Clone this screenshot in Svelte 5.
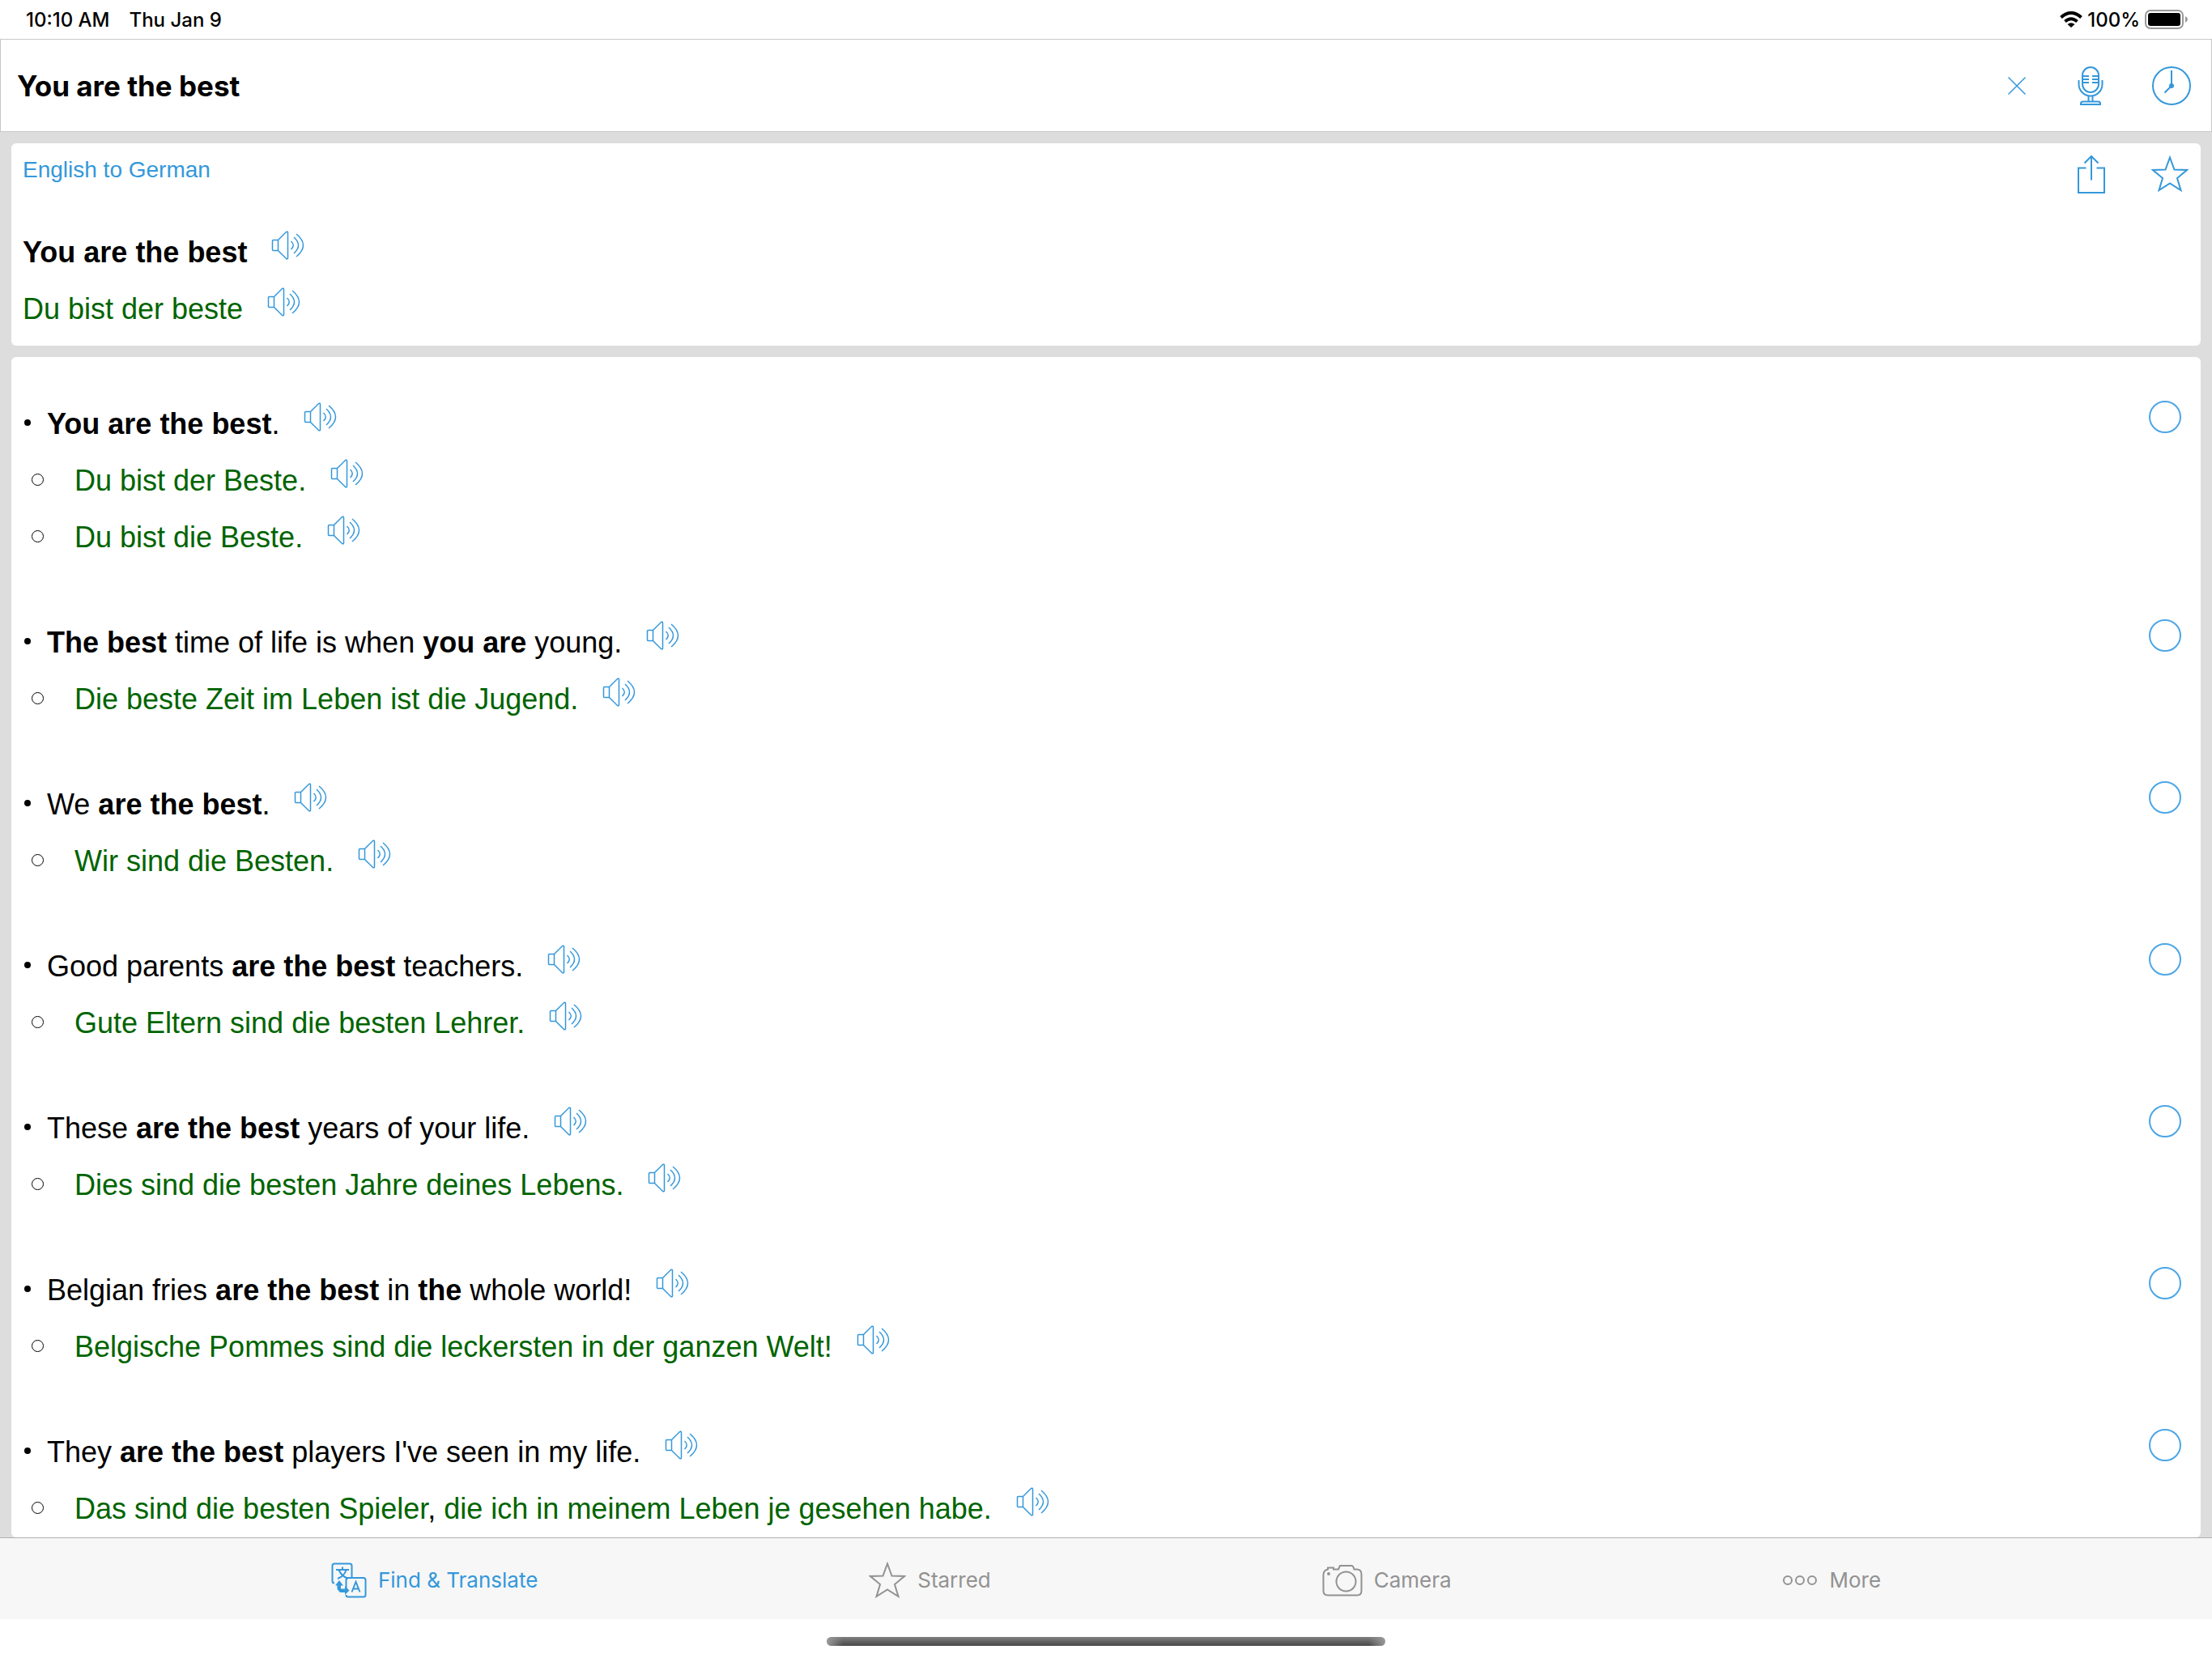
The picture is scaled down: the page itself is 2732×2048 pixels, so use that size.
<script lang="ts">
  interface Part {
    text: string;
    strong?: boolean;
    plain?: boolean;
  }

  interface Example {
    source: Part[];
    targets: Part[][];
  }

  const examples: Example[] = [
    {
      source: [{ text: "You are the best", strong: true }, { text: "." }],
      targets: [
        [{ text: "Du bist der Beste." }],
        [{ text: "Du bist die Beste." }],
      ],
    },
    {
      source: [
        { text: "The best", strong: true },
        { text: " time of life is when " },
        { text: "you are", strong: true },
        { text: " young." },
      ],
      targets: [[{ text: "Die beste Zeit im Leben ist die Jugend." }]],
    },
    {
      source: [
        { text: "We " },
        { text: "are the best", strong: true },
        { text: "." },
      ],
      targets: [[{ text: "Wir sind die Besten." }]],
    },
    {
      source: [
        { text: "Good parents " },
        { text: "are the best", strong: true },
        { text: " teachers." },
      ],
      targets: [[{ text: "Gute Eltern sind die besten Lehrer." }]],
    },
    {
      source: [
        { text: "These " },
        { text: "are the best", strong: true },
        { text: " years of your life." },
      ],
      targets: [[{ text: "Dies sind die besten Jahre deines Lebens." }]],
    },
    {
      source: [
        { text: "Belgian fries " },
        { text: "are the best", strong: true },
        { text: " in " },
        { text: "the", strong: true },
        { text: " whole world!" },
      ],
      targets: [
        [{ text: "Belgische Pommes sind die leckersten in der ganzen Welt!" }],
      ],
    },
    {
      source: [
        { text: "They " },
        { text: "are the best", strong: true },
        { text: " players I've seen in my life." },
      ],
      targets: [
        [
          { text: "Das sind die besten Spieler" },
          { text: ",", plain: true },
          { text: " die ich in meinem Leben je gesehen habe." },
        ],
      ],
    },
  ];

  const tabs = [
    { id: "translate", label: "Find & Translate" },
    { id: "starred", label: "Starred" },
    { id: "camera", label: "Camera" },
    { id: "more", label: "More" },
  ];

  let query = $state("You are the best");
  let activeTab = $state("translate");
  let picked = $state(examples.map(() => false));
</script>

{#snippet speaker()}
  <button class="speaker" aria-label="Listen">
    <svg width="42" height="36" viewBox="0 0 42 36">
      <path d="M8.5 11.5h-6q-1 0-1 1v11q0 1 1 1h6zM8.5 11.5 18.5 1.500q2-1 2 1v31q0 2-2 1L8.500 24.500" />
      <path d="M24.500 13q5.500 5 0 10M28 8q11 10 0 20M31 4q17 14 0 28" />
    </svg>
  </button>
{/snippet}

{#snippet star()}
  <svg width="46" height="46" viewBox="0 0 46 46">
    <path d="M23 2.5 28.5 17.5 44 18 32 28 36.5 43 23 34.5 9.5 43 14 28 2 18 17.5 17.5z" />
  </svg>
{/snippet}

<div class="app">
  <header class="status-bar">
    <span>10:10 AM</span>
    <span>Thu Jan 9</span>
    <div class="status-right">
      <svg width="28" height="20" viewBox="0 0 28 20">
        <path class="wave" d="M1.5 7.500Q14-3.500 26.5 7.500" />
        <path class="wave" d="M6.5 12.500Q14 6 21.5 12.500" />
        <path d="M9.5 16Q14 12.500 18.5 16L14 20z" fill="#000" />
      </svg>
      <span>100%</span>
      <svg width="54" height="24" viewBox="0 0 54 24">
        <rect class="battery" x="1" y="1" width="46" height="22" rx="6" />
        <rect x="4" y="4" width="40" height="16" rx="3" fill="#000" />
        <path d="M50 8q3 1.500 3 4t-3 4z" fill="#999" />
      </svg>
    </div>
  </header>

  <div class="search-bar">
    <input type="text" aria-label="Search" bind:value={query} />
    <button aria-label="Clear" onclick={() => (query = "")}>
      <svg class="thin" width="24" height="24" viewBox="0 0 24 24">
        <path d="M1.5 1.5l21 21M22.5 1.5l-21 21" />
      </svg>
    </button>
    <button class="mic" aria-label="Speak">
      <svg width="32" height="50" viewBox="0 0 32 50">
        <rect x="6" y="2" width="20" height="31" rx="10" />
        <path d="M6 13h8M6 17h8M6 21h8M18 13h8M18 17h8M18 21h8" />
        <path d="M1.5 18v5a14.5 14.5 0 0 0 29 0v-5M13.5 38v7M18.5 38v7" />
        <path d="M4 48v-1q0-2.500 2.500-2.500h19q2.500 0 2.500 2.500v1z" />
      </svg>
    </button>
    <button aria-label="History">
      <svg width="50" height="50" viewBox="0 0 50 50">
        <circle cx="25" cy="25" r="23" />
        <path d="M25 6v19l-8.500 8.500" />
        <circle cx="25" cy="25" r="2" class="solid" />
      </svg>
    </button>
  </div>

  <main>
    <section class="card translation">
      <div class="card-header">
        <h2>English to German</h2>
        <div class="card-actions">
          <button aria-label="Share">
            <svg width="36" height="48" viewBox="0 0 36 48">
              <path d="M11.5 16.5H2v30.500h32V16.500h-9.500M18 31.500V2M9.500 10.500 18 2l8.500 8.500" />
            </svg>
          </button>
          <button aria-label="Star">{@render star()}</button>
        </div>
      </div>
      <div class="line"><strong>You are the best</strong>{@render speaker()}</div>
      <div class="line target"><span>Du bist der beste</span>{@render speaker()}</div>
    </section>

    <section class="card examples">
      {#each examples as example, i}
        <div class="example">
          <ul>
            <li class="line source">
              <span>{#each example.source as part}{#if part.strong}<strong>{part.text}</strong>{:else}{part.text}{/if}{/each}</span>
              {@render speaker()}
            </li>
            {#each example.targets as target}
              <li class="line target">
                <span>{#each target as part}<span class:plain={part.plain}>{part.text}</span>{/each}</span>
                {@render speaker()}
              </li>
            {/each}
          </ul>
          <input type="checkbox" aria-label="Select example" bind:checked={picked[i]} />
        </div>
      {/each}
    </section>
  </main>

  <nav class="tab-bar">
    {#each tabs as tab}
      <button class="tab" class:active={activeTab === tab.id} onclick={() => (activeTab = tab.id)}>
        {#if tab.id === "translate"}
          <svg width="44" height="44" viewBox="0 0 44 44">
            <path d="M4 25.5q-2.500 0-2.500-2.500V4q0-2.500 2.500-2.500h19q2.500 0 2.500 2.500v14" />
            <path d="M18.500 32V21.500q0-2.500 2.500-2.500h19q2.500 0 2.500 2.500v18.500q0 2.500-2.500 2.500H21q-2.500 0-2.500-2.500" />
            <path d="M6 9h16M14 5.500V9M18.500 9.500Q16 17 8 20M9.500 9.500Q13 17 21 20M25.500 36.500 30.500 24l5 12.500M27 32.500h7" />
            <path class="solid" stroke="none" d="M5 28.500 10 22l5 6.500h-3v4h5v-3.500l5.500 5.500-5.500 5.500V37h-6l-3.500-4v-4.500z" />
          </svg>
        {:else if tab.id === "starred"}
          {@render star()}
        {:else if tab.id === "camera"}
          <svg width="50" height="40" viewBox="0 0 50 40">
            <path d="M7 6.500V4.500h7v2h6l2-4.500h14q2.500 0 3.500 4.500h3q6 0 6 6V33q0 5.500-5.500 5.500H7Q1.500 38.500 1.500 33V13q0-5 5.500-6.500z" />
            <circle cx="29.5" cy="21.5" r="12" />
            <circle cx="8" cy="12" r="1" class="solid" />
          </svg>
        {:else}
          <svg width="44" height="14" viewBox="0 0 44 14">
            <circle cx="7" cy="7" r="5" />
            <circle cx="22" cy="7" r="5" />
            <circle cx="37" cy="7" r="5" />
          </svg>
        {/if}
        <span>{tab.label}</span>
      </button>
    {/each}
  </nav>
  <footer><div class="home-indicator"></div></footer>
</div>

<style>
  :global(body) {
    background: #fff;
  }

  .app {
    display: flex;
    flex-direction: column;
    height: 100vh;
    color: #000;
    font-family: "Liberation Sans", Arial, sans-serif;
  }

  svg {
    display: block;
    fill: none;
    stroke: currentColor;
    stroke-width: 2;
  }

  .thin {
    stroke-width: 1.5;
  }

  .solid {
    fill: currentColor;
  }

  button {
    padding: 0;
    border: 0;
    background: none;
    color: #3498db;
    font: inherit;
    cursor: pointer;
  }

  .status-bar {
    display: flex;
    align-items: center;
    gap: 24px;
    height: 48px;
    padding: 0 29px 0 32px;
    font-family: Inter, sans-serif;
    font-size: 24px;
    font-weight: 500;
  }

  .status-bar svg {
    stroke: none;
  }

  .status-bar .wave {
    stroke: #000;
    stroke-width: 4;
  }

  .status-bar .battery {
    stroke: #999;
  }

  .status-right {
    display: flex;
    align-items: center;
    gap: 6px;
    margin-left: auto;
  }

  .search-bar {
    display: flex;
    align-items: center;
    box-sizing: border-box;
    height: 115px;
    padding: 0 24px 0 20px;
    border: 1px solid #c8c8c8;
  }

  .search-bar input {
    flex: 1;
    min-width: 0;
    padding: 0;
    border: 0;
    outline: 0;
    background: none;
    color: #000;
    font-family: Inter, sans-serif;
    font-size: 35px;
    font-weight: 700;
  }

  .mic {
    margin: 0 59px 0 63px;
  }

  main {
    display: flex;
    flex: 1;
    flex-direction: column;
    gap: 14px;
    min-height: 0;
    padding: 14px 14px 0;
    overflow-y: auto;
    scrollbar-width: none;
    background: #ddd;
  }

  .card {
    flex-shrink: 0;
    border-radius: 6px;
    background: #fff;
    font-size: 36px;
  }

  .translation {
    padding: 0 14px 12px;
  }

  .card-header {
    display: flex;
    align-items: flex-start;
    justify-content: space-between;
    height: 98px;
  }

  h2 {
    margin: 16px 0 0;
    color: #3498db;
    font-size: 28px;
    font-weight: 400;
    line-height: 34px;
  }

  .card-actions {
    display: flex;
    gap: 56px;
    padding: 14px 1px 0 0;
  }

  .line {
    display: flex;
    align-items: center;
    box-sizing: border-box;
    gap: 30px;
    height: 70px;
    padding-top: 4px;
    white-space: pre;
  }

  .target {
    color: #006400;
  }

  .plain {
    color: #000;
  }

  .speaker {
    margin-bottom: 18px;
  }

  .speaker svg {
    stroke-width: 1.5;
  }

  .examples {
    display: flex;
    flex-direction: column;
    gap: 60px;
    padding: 46px 24px 2px 16px;
  }

  .example {
    display: flex;
    align-items: flex-start;
    justify-content: space-between;
  }

  ul {
    margin: 0;
    padding: 0;
    list-style: none;
  }

  li::before {
    box-sizing: border-box;
    border-radius: 50%;
    content: "";
  }

  .source::before {
    width: 8px;
    height: 8px;
    margin: 0 -10px 4px 0;
    background: #000;
  }

  li.target::before {
    width: 15px;
    height: 15px;
    margin: 0 8px 4px 9px;
    border: 1px solid #000;
  }

  input[type="checkbox"] {
    width: 40px;
    height: 40px;
    margin: 8px 0 0;
    border: 2px solid #4ba6e6;
    border-radius: 50%;
    appearance: none;
  }

  input[type="checkbox"]:checked {
    background: #4ba6e6;
  }

  .tab-bar {
    display: flex;
    align-items: center;
    justify-content: space-evenly;
    box-sizing: border-box;
    height: 101px;
    padding-top: 3px;
    border-top: 1px solid #b0b0b0;
    background: #f7f7f7;
    font-family: Inter, sans-serif;
    font-size: 26px;
  }

  .tab {
    display: flex;
    align-items: center;
    gap: 14px;
    color: #929292;
  }

  .tab.active {
    color: #3498db;
  }

  footer {
    display: flex;
    align-items: center;
    justify-content: center;
    box-sizing: border-box;
    height: 48px;
    padding-top: 7px;
  }

  .home-indicator {
    width: 690px;
    height: 11px;
    border-radius: 6px;
    background:
      linear-gradient(90deg, #999, transparent 20px calc(100% - 20px), #999),
      linear-gradient(#808080, #484848);
  }
</style>
